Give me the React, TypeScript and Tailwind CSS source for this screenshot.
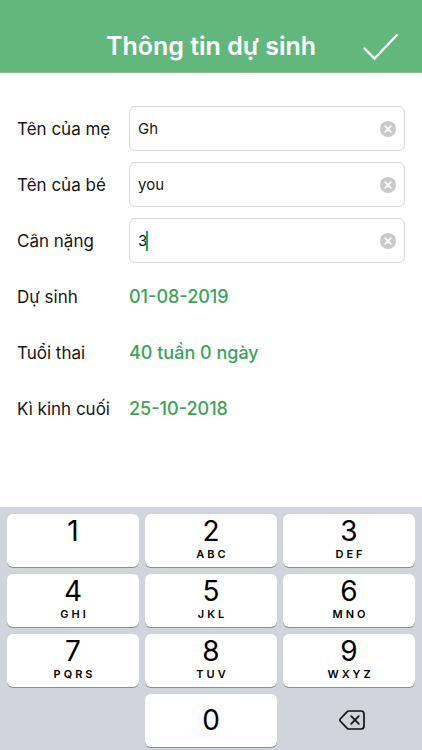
import { useState } from "react";

const fields = [
  { id: "mother", label: "Tên của mẹ", initial: "Gh", active: false },
  { id: "baby", label: "Tên của bé", initial: "you", active: false },
  { id: "weight", label: "Cân nặng", initial: "3", active: true },
];

const facts = [
  { label: "Dự sinh", value: "01-08-2019" },
  { label: "Tuổi thai", value: "40 tuần 0 ngày" },
  { label: "Kì kinh cuối", value: "25-10-2018" },
];

const keys = [
  { digit: "1", letters: "" },
  { digit: "2", letters: "ABC" },
  { digit: "3", letters: "DEF" },
  { digit: "4", letters: "GHI" },
  { digit: "5", letters: "JKL" },
  { digit: "6", letters: "MNO" },
  { digit: "7", letters: "PQRS" },
  { digit: "8", letters: "TUV" },
  { digit: "9", letters: "WXYZ" },
];

const keyStyle =
  "flex h-[53px] flex-col items-center rounded-md bg-white text-black shadow-[0_1px_0_#8a8c90]";

function Field({ id, label, initial, active }: (typeof fields)[number]) {
  const [value, setValue] = useState(initial);
  return (
    <div className="flex h-[45px] items-center">
      <label htmlFor={id} className="w-28 shrink-0 text-[17px] leading-6">
        {label}
      </label>
      <div className="relative flex h-full min-w-0 flex-1 items-center rounded-md border border-[#d9d9d9] pr-2 pl-2">
        <input
          id={id}
          value={value}
          onChange={(e) => setValue(e.target.value)}
          className="min-w-0 flex-1 bg-transparent text-[15px] leading-5 caret-[#1fa35c] outline-none"
        />
        {active && value === initial && (
          <span className="absolute top-3 left-4 h-5 w-0.5 bg-[#1fa35c]" />
        )}
        <button type="button" aria-label={`Xóa ${label}`} onClick={() => setValue("")}>
          <svg viewBox="0 0 16 16" className="block size-4">
            <circle cx="8" cy="8" r="8" fill="#c9c9c9" />
            <path d="M5.2 5.2l5.6 5.6M10.8 5.2l-5.6 5.6" stroke="white" strokeWidth="1.7" strokeLinecap="round" />
          </svg>
        </button>
      </div>
    </div>
  );
}

export default function App() {
  return (
    <div className="flex min-h-screen flex-col bg-white font-[Inter,'Noto_Sans',sans-serif] text-[#161616]">
      <header className="grid grid-cols-[1fr_auto_1fr] items-center border-b border-[#8fbd9c] bg-[#62b77d] pt-5">
        <h1 className="col-start-2 py-2.5 text-[25px] leading-8 font-semibold text-white">
          Thông tin dự sinh
        </h1>
        <button type="button" aria-label="Lưu" className="mr-[23px] justify-self-end pt-0.5">
          <svg viewBox="0 0 38 28" className="block h-7 w-[38px]" fill="none">
            <path d="M3.5 15.5L13.5 25.5L36 2" stroke="white" strokeWidth="2.4" strokeLinecap="round" />
          </svg>
        </button>
      </header>

      <main className="flex flex-col gap-[11px] pt-[33px] pr-[17px] pb-6 pl-[17px]">
        {fields.map((f) => (
          <Field key={f.id} {...f} />
        ))}
        <dl className="flex flex-col gap-[11px]">
          {facts.map((f) => (
            <div key={f.label} className="flex h-[45px] items-center leading-6">
              <dt className="w-28 shrink-0 text-[17px]">{f.label}</dt>
              <dd className="text-[18px] font-medium text-[#3aa35a]">{f.value}</dd>
            </div>
          ))}
        </dl>
      </main>

      <section
        aria-label="Bàn phím số"
        className="mt-auto grid grid-cols-3 gap-x-1.5 gap-y-[7px] bg-[#d1d4da] px-[7px] pt-[7px] pb-[3px]"
      >
        {keys.map((k) => (
          <button key={k.digit} type="button" className={keyStyle}>
            <span className="pt-0.5 text-[28px] leading-[31px]">{k.digit}</span>
            <span className="pl-[3px] text-[11px] leading-[14px] font-semibold tracking-[3px]">{k.letters}</span>
          </button>
        ))}
        <button type="button" className={`${keyStyle} col-start-2 justify-center`}>
          <span className="text-[28px] leading-[31px]">0</span>
        </button>
        <button type="button" aria-label="Xóa ký tự" className="flex h-[53px] items-center justify-center pb-0.5 pl-1.5">
          <svg viewBox="0 0 26 20" className="block h-5 w-[26px]" fill="none" stroke="#111" strokeWidth="1.7" strokeLinecap="round" strokeLinejoin="round">
            <path d="M9.6 1H22a3 3 0 0 1 3 3v12a3 3 0 0 1-3 3H9.6a2 2 0 0 1-1.4-.6L1.2 11a1.4 1.4 0 0 1 0-2l7-7.4A2 2 0 0 1 9.600 1z" />
            <path d="M12.200 6.200l7.600 7.600M19.800 6.200l-7.600 7.600" />
          </svg>
        </button>
      </section>
    </div>
  );
}
